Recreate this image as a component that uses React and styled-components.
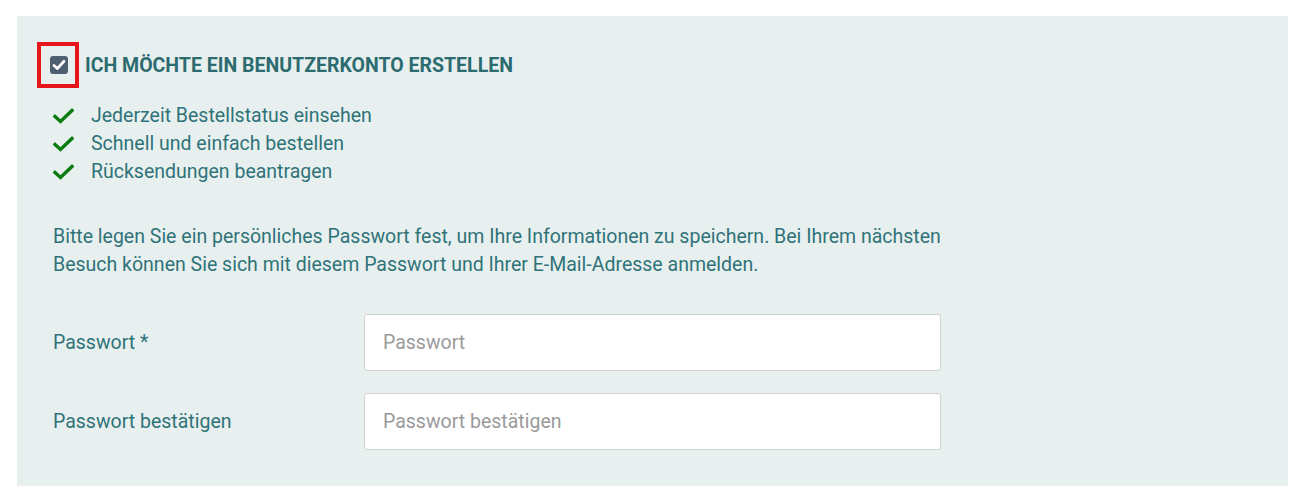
import React from "react";
import styled, { createGlobalStyle } from "styled-components";

const Global = createGlobalStyle`
  html, body { margin: 0; padding: 0; background: #ffffff; }
  body { font-family: Roboto, "Liberation Sans", Arial, sans-serif; }
  * { box-sizing: border-box; }
`;

const Page = styled.div`
  padding: 16px 21px 13px 17px;
`;

const Panel = styled.section`
  background: #e8f0ef;
  padding: 26px 36px 36px 36px;
  color: #2f7379;
  font-size: 19.5px;
`;

const HeadingRow = styled.label`
  display: flex;
  align-items: center;
  gap: 6px;
  margin-left: -16px;
`;

const Highlight = styled.span`
  width: 42px;
  height: 46px;
  border: 4px solid #e8141c;
  display: flex;
  align-items: center;
  justify-content: center;
  padding-left: 2px;
`;

const Box = styled.span`
  width: 18px;
  height: 18px;
  border-radius: 3px;
  background: #4e6070;
  display: flex;
  align-items: center;
  justify-content: center;
`;

const Heading = styled.span`
  font-weight: 700;
  font-size: 19.5px;
  text-transform: uppercase;
  color: #2c6b6f;
`;

const List = styled.ul`
  list-style: none;
  margin: 14px 0 0 0;
  padding: 0;
`;

const Item = styled.li`
  display: flex;
  align-items: center;
  height: 28px;
  line-height: 28px;
  gap: 17px;
`;

const Para = styled.p`
  margin: 37px 0 0 0;
  line-height: 28px;
  max-width: 960px;
`;

const Row = styled.div`
  display: flex;
  align-items: center;
  margin-top: ${(p) => p.$top}px;
`;

const Label = styled.label`
  width: 311px;
  flex: none;
`;

const Input = styled.input`
  width: 577px;
  height: 57px;
  border: 1px solid #cfd3d3;
  border-radius: 3px;
  background: #ffffff;
  padding: 0 18px;
  font-family: inherit;
  font-size: 19.5px;
  color: #333;
  outline: none;
  &::placeholder { color: #9a9a9a; }
`;

const Check = () => (
  <svg width="21" height="16" viewBox="0 0 21 16">
    <path d="M2 8.5 L7.5 13.5 L19 2.5" fill="none" stroke="#0b7c10" strokeWidth="3.4" strokeLinecap="square" />
  </svg>
);

const BoxTick = () => (
  <svg width="14" height="12" viewBox="0 0 14 12">
    <path d="M2 6.5 L5.3 9.6 L12 2.2" fill="none" stroke="#ffffff" strokeWidth="2.8" strokeLinecap="round" strokeLinejoin="round" />
  </svg>
);

const items = [
  "Jederzeit Bestellstatus einsehen",
  "Schnell und einfach bestellen",
  "Rücksendungen beantragen",
];

export default function App() {
  return (
    <>
      <Global />
      <Page>
        <Panel>
          <HeadingRow>
            <Highlight>
              <Box><BoxTick /></Box>
            </Highlight>
            <Heading>Ich möchte ein Benutzerkonto erstellen</Heading>
          </HeadingRow>
          <List>
            {items.map((t) => (
              <Item key={t}>
                <Check />
                <span>{t}</span>
              </Item>
            ))}
          </List>
          <Para>
            Bitte legen Sie ein persönliches Passwort fest, um Ihre Informationen zu speichern. Bei Ihrem nächsten
            <br />
            Besuch können Sie sich mit diesem Passwort und Ihrer E-Mail-Adresse anmelden.
          </Para>
          <Row $top={35}>
            <Label>Passwort *</Label>
            <Input type="password" placeholder="Passwort" />
          </Row>
          <Row $top={22}>
            <Label>Passwort bestätigen</Label>
            <Input type="password" placeholder="Passwort bestätigen" />
          </Row>
        </Panel>
      </Page>
    </>
  );
}
